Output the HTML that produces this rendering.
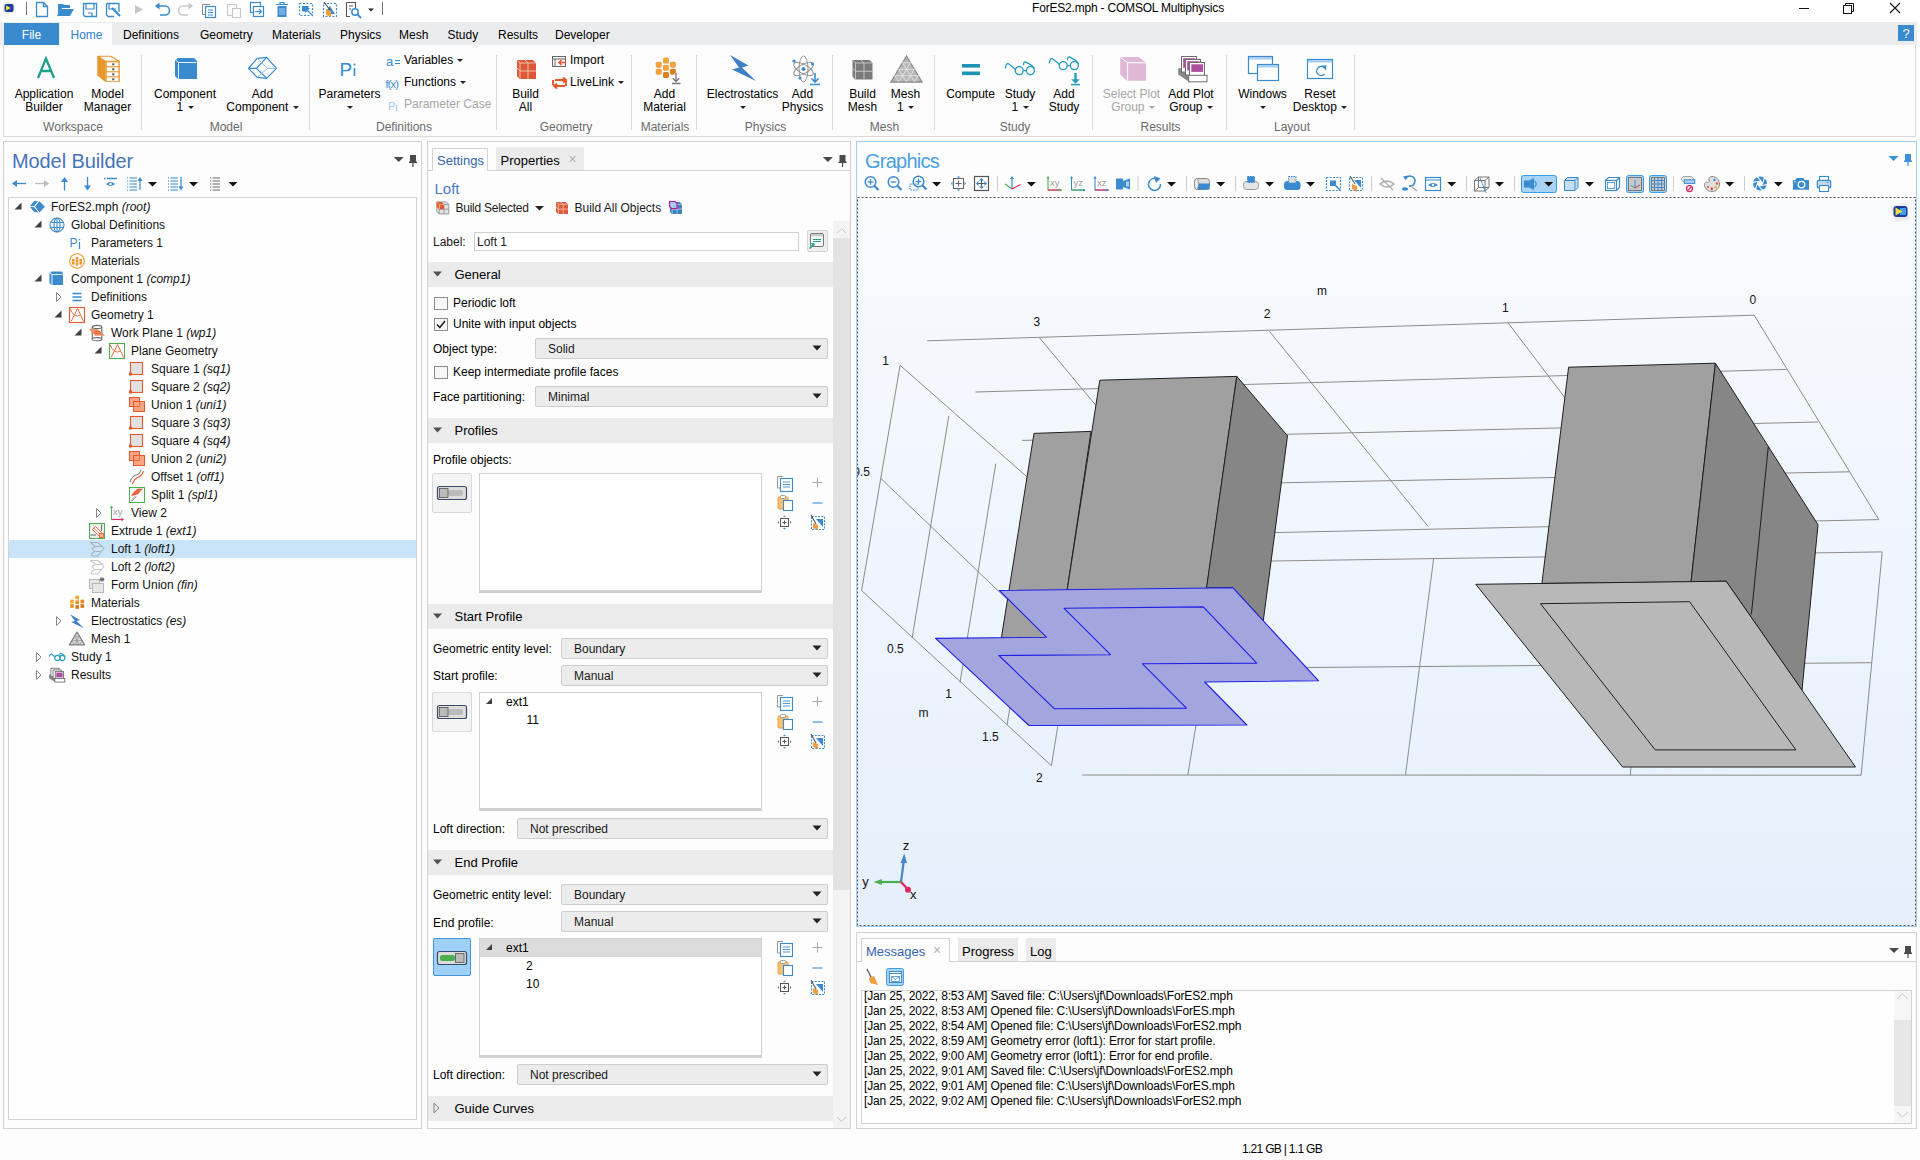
<!DOCTYPE html><html><head><meta charset="utf-8"><style>
html,body{margin:0;padding:0;width:1920px;height:1160px;overflow:hidden;background:#fcfcfc;font-family:"Liberation Sans",sans-serif;}
.a{position:absolute;}
.t{position:absolute;white-space:nowrap;line-height:1;font-family:"Liberation Sans",sans-serif;}
i{font-style:italic;}
</style></head><body>

<div class="a" style="left:0px;top:0px;width:1920px;height:22px;background:#ffffff"></div>
<div class="t" style="left:828.0px;width:600px;text-align:center;top:1.8px;font-size:12px;color:#000;letter-spacing:-0.2px">ForES2.mph - COMSOL Multiphysics</div>
<div class="a" style="left:1799px;top:8px;width:10px;height:1px;background:#111"></div>
<svg class="a" style="left:1843px;top:3px;" width="12" height="12" viewBox="0 0 12 12"><rect x="0.5" y="2.5" width="8" height="8" fill="none" stroke="#111"/><path d="M2.5 2.5V0.5H10.5V8.5H8.5" fill="none" stroke="#111"/></svg>
<svg class="a" style="left:1889px;top:2px;" width="12" height="12" viewBox="0 0 12 12"><path d="M1 1L11 11M11 1L1 11" stroke="#111" stroke-width="1.1"/></svg>
<div class="a" style="left:0px;top:22px;width:1917px;height:23px;background:#ebecee"></div>
<div class="a" style="left:4px;top:23px;width:55px;height:22px;background:#3a8ad0"></div>
<div class="t" style="left:-268.5px;width:600px;text-align:center;top:28.8px;font-size:12px;color:#ffffff;">File</div>
<div class="a" style="left:60px;top:23px;width:52px;height:22px;background:#fcfcfc"></div>
<div class="t" style="left:70.5px;top:28.8px;font-size:12px;color:#2f7fd0;">Home</div>
<div class="t" style="left:123.0px;top:28.8px;font-size:12px;color:#000;">Definitions</div>
<div class="t" style="left:200.0px;top:28.8px;font-size:12px;color:#000;">Geometry</div>
<div class="t" style="left:272.0px;top:28.8px;font-size:12px;color:#000;">Materials</div>
<div class="t" style="left:340.0px;top:28.8px;font-size:12px;color:#000;">Physics</div>
<div class="t" style="left:399.0px;top:28.8px;font-size:12px;color:#000;">Mesh</div>
<div class="t" style="left:447.5px;top:28.8px;font-size:12px;color:#000;">Study</div>
<div class="t" style="left:498.0px;top:28.8px;font-size:12px;color:#000;">Results</div>
<div class="t" style="left:555.0px;top:28.8px;font-size:12px;color:#000;">Developer</div>
<div class="a" style="left:1898px;top:25px;width:16px;height:16px;background:#3a8ad0"></div>
<div class="t" style="left:1606.0px;width:600px;text-align:center;top:27.0px;font-size:13px;color:#fff;">?</div>
<div class="a" style="left:3px;top:45px;width:1913px;height:92px;background:#fcfcfc;border:1px solid #d9d9d9;border-top:none;box-sizing:border-box"></div>
<div class="a" style="left:141px;top:55px;width:1px;height:75px;background:#d8d8d8"></div>
<div class="a" style="left:309px;top:55px;width:1px;height:75px;background:#d8d8d8"></div>
<div class="a" style="left:496px;top:55px;width:1px;height:75px;background:#d8d8d8"></div>
<div class="a" style="left:631px;top:55px;width:1px;height:75px;background:#d8d8d8"></div>
<div class="a" style="left:696px;top:55px;width:1px;height:75px;background:#d8d8d8"></div>
<div class="a" style="left:832px;top:55px;width:1px;height:75px;background:#d8d8d8"></div>
<div class="a" style="left:934px;top:55px;width:1px;height:75px;background:#d8d8d8"></div>
<div class="a" style="left:1092px;top:55px;width:1px;height:75px;background:#d8d8d8"></div>
<div class="a" style="left:1226px;top:55px;width:1px;height:75px;background:#d8d8d8"></div>
<div class="a" style="left:1354px;top:55px;width:1px;height:75px;background:#d8d8d8"></div>
<div class="t" style="left:-227.0px;width:600px;text-align:center;top:120.8px;font-size:12px;color:#6b6b6b;">Workspace</div>
<div class="t" style="left:-74.0px;width:600px;text-align:center;top:120.8px;font-size:12px;color:#6b6b6b;">Model</div>
<div class="t" style="left:104.0px;width:600px;text-align:center;top:120.8px;font-size:12px;color:#6b6b6b;">Definitions</div>
<div class="t" style="left:266.0px;width:600px;text-align:center;top:120.8px;font-size:12px;color:#6b6b6b;">Geometry</div>
<div class="t" style="left:365.0px;width:600px;text-align:center;top:120.8px;font-size:12px;color:#6b6b6b;">Materials</div>
<div class="t" style="left:465.5px;width:600px;text-align:center;top:120.8px;font-size:12px;color:#6b6b6b;">Physics</div>
<div class="t" style="left:584.5px;width:600px;text-align:center;top:120.8px;font-size:12px;color:#6b6b6b;">Mesh</div>
<div class="t" style="left:715.0px;width:600px;text-align:center;top:120.8px;font-size:12px;color:#6b6b6b;">Study</div>
<div class="t" style="left:860.5px;width:600px;text-align:center;top:120.8px;font-size:12px;color:#6b6b6b;">Results</div>
<div class="t" style="left:992.0px;width:600px;text-align:center;top:120.8px;font-size:12px;color:#6b6b6b;">Layout</div>
<div class="t" style="left:-256.0px;width:600px;text-align:center;top:88.3px;font-size:12px;color:#000;">Application</div>
<div class="t" style="left:-256.0px;width:600px;text-align:center;top:100.8px;font-size:12px;color:#000;">Builder</div>
<div class="t" style="left:-192.5px;width:600px;text-align:center;top:88.3px;font-size:12px;color:#000;">Model</div>
<div class="t" style="left:-192.5px;width:600px;text-align:center;top:100.8px;font-size:12px;color:#000;">Manager</div>
<div class="t" style="left:-115.0px;width:600px;text-align:center;top:88.3px;font-size:12px;color:#000;">Component</div>
<div class="t" style="left:-115.0px;width:600px;text-align:center;top:100.8px;font-size:12px;color:#000;">1 <span style="display:inline-block;width:0;height:0;border-left:3.5px solid transparent;border-right:3.5px solid transparent;border-top:3.5px solid #222;vertical-align:2px;margin-left:1px"></span></div>
<div class="t" style="left:-37.5px;width:600px;text-align:center;top:88.3px;font-size:12px;color:#000;">Add</div>
<div class="t" style="left:-37.5px;width:600px;text-align:center;top:100.8px;font-size:12px;color:#000;">Component <span style="display:inline-block;width:0;height:0;border-left:3.5px solid transparent;border-right:3.5px solid transparent;border-top:3.5px solid #222;vertical-align:2px;margin-left:1px"></span></div>
<div class="t" style="left:49.5px;width:600px;text-align:center;top:88.3px;font-size:12px;color:#000;">Parameters</div>
<div class="t" style="left:49.5px;width:600px;text-align:center;top:100.8px;font-size:12px;color:#000;"><span style="display:inline-block;width:0;height:0;border-left:3.5px solid transparent;border-right:3.5px solid transparent;border-top:3.5px solid #222;vertical-align:2px;margin-left:0"></span></div>
<div class="t" style="left:225.5px;width:600px;text-align:center;top:88.3px;font-size:12px;color:#000;">Build</div>
<div class="t" style="left:225.5px;width:600px;text-align:center;top:100.8px;font-size:12px;color:#000;">All</div>
<div class="t" style="left:364.5px;width:600px;text-align:center;top:88.3px;font-size:12px;color:#000;">Add</div>
<div class="t" style="left:364.5px;width:600px;text-align:center;top:100.8px;font-size:12px;color:#000;">Material</div>
<div class="t" style="left:442.5px;width:600px;text-align:center;top:88.3px;font-size:12px;color:#000;">Electrostatics</div>
<div class="t" style="left:442.5px;width:600px;text-align:center;top:100.8px;font-size:12px;color:#000;"><span style="display:inline-block;width:0;height:0;border-left:3.5px solid transparent;border-right:3.5px solid transparent;border-top:3.5px solid #222;vertical-align:2px;margin-left:0"></span></div>
<div class="t" style="left:502.5px;width:600px;text-align:center;top:88.3px;font-size:12px;color:#000;">Add</div>
<div class="t" style="left:502.5px;width:600px;text-align:center;top:100.8px;font-size:12px;color:#000;">Physics</div>
<div class="t" style="left:562.5px;width:600px;text-align:center;top:88.3px;font-size:12px;color:#000;">Build</div>
<div class="t" style="left:562.5px;width:600px;text-align:center;top:100.8px;font-size:12px;color:#000;">Mesh</div>
<div class="t" style="left:605.5px;width:600px;text-align:center;top:88.3px;font-size:12px;color:#000;">Mesh</div>
<div class="t" style="left:605.5px;width:600px;text-align:center;top:100.8px;font-size:12px;color:#000;">1 <span style="display:inline-block;width:0;height:0;border-left:3.5px solid transparent;border-right:3.5px solid transparent;border-top:3.5px solid #222;vertical-align:2px;margin-left:1px"></span></div>
<div class="t" style="left:670.5px;width:600px;text-align:center;top:88.3px;font-size:12px;color:#000;">Compute</div>
<div class="t" style="left:720.0px;width:600px;text-align:center;top:88.3px;font-size:12px;color:#000;">Study</div>
<div class="t" style="left:720.0px;width:600px;text-align:center;top:100.8px;font-size:12px;color:#000;">1 <span style="display:inline-block;width:0;height:0;border-left:3.5px solid transparent;border-right:3.5px solid transparent;border-top:3.5px solid #222;vertical-align:2px;margin-left:1px"></span></div>
<div class="t" style="left:764.0px;width:600px;text-align:center;top:88.3px;font-size:12px;color:#000;">Add</div>
<div class="t" style="left:764.0px;width:600px;text-align:center;top:100.8px;font-size:12px;color:#000;">Study</div>
<div class="t" style="left:891.0px;width:600px;text-align:center;top:88.3px;font-size:12px;color:#000;">Add Plot</div>
<div class="t" style="left:891.0px;width:600px;text-align:center;top:100.8px;font-size:12px;color:#000;">Group <span style="display:inline-block;width:0;height:0;border-left:3.5px solid transparent;border-right:3.5px solid transparent;border-top:3.5px solid #222;vertical-align:2px;margin-left:1px"></span></div>
<div class="t" style="left:962.5px;width:600px;text-align:center;top:88.3px;font-size:12px;color:#000;">Windows</div>
<div class="t" style="left:962.5px;width:600px;text-align:center;top:100.8px;font-size:12px;color:#000;"><span style="display:inline-block;width:0;height:0;border-left:3.5px solid transparent;border-right:3.5px solid transparent;border-top:3.5px solid #222;vertical-align:2px;margin-left:0"></span></div>
<div class="t" style="left:1020.0px;width:600px;text-align:center;top:88.3px;font-size:12px;color:#000;">Reset</div>
<div class="t" style="left:1020.0px;width:600px;text-align:center;top:100.8px;font-size:12px;color:#000;">Desktop <span style="display:inline-block;width:0;height:0;border-left:3.5px solid transparent;border-right:3.5px solid transparent;border-top:3.5px solid #222;vertical-align:2px;margin-left:1px"></span></div>
<div class="t" style="left:831.5px;width:600px;text-align:center;top:88.3px;font-size:12px;color:#a6a6a6;">Select Plot</div>
<div class="t" style="left:833.0px;width:600px;text-align:center;top:100.8px;font-size:12px;color:#a6a6a6;">Group <span style="display:inline-block;width:0;height:0;border-left:3.5px solid transparent;border-right:3.5px solid transparent;border-top:3.5px solid #a6a6a6;vertical-align:2px;margin-left:1px"></span></div>
<div class="t" style="left:404.0px;top:53.8px;font-size:12px;color:#000;">Variables <span style="display:inline-block;width:0;height:0;border-left:3.5px solid transparent;border-right:3.5px solid transparent;border-top:3.5px solid #222;vertical-align:2px;margin-left:1px"></span></div>
<div class="t" style="left:404.0px;top:75.8px;font-size:12px;color:#000;">Functions <span style="display:inline-block;width:0;height:0;border-left:3.5px solid transparent;border-right:3.5px solid transparent;border-top:3.5px solid #222;vertical-align:2px;margin-left:1px"></span></div>
<div class="t" style="left:404.0px;top:97.8px;font-size:12px;color:#a6a6a6;">Parameter Case</div>
<div class="t" style="left:570.0px;top:54.3px;font-size:12px;color:#000;">Import</div>
<div class="t" style="left:570.0px;top:75.8px;font-size:12px;color:#000;">LiveLink <span style="display:inline-block;width:0;height:0;border-left:3.5px solid transparent;border-right:3.5px solid transparent;border-top:3.5px solid #222;vertical-align:2px;margin-left:1px"></span></div>
<div class="a" style="left:3px;top:141px;width:419px;height:988px;border:1px solid #d2d2d2;box-sizing:border-box;background:#fdfdfd"></div>
<div class="t" style="left:12.0px;top:151.1px;font-size:20px;color:#4673b9;letter-spacing:-0.1px">Model Builder</div>
<div class="a" style="left:8px;top:197px;width:409px;height:923px;border:1px solid #d2d2d2;box-sizing:border-box;background:#fefefe"></div>
<div class="a" style="left:427px;top:141px;width:424px;height:988px;border:1px solid #d2d2d2;box-sizing:border-box;background:#fdfdfd"></div>
<div class="a" style="left:428px;top:170px;width:422px;height:1px;background:#d2d2d2"></div>
<div class="a" style="left:432px;top:148px;width:56px;height:23px;background:#fdfdfd;border:1px solid #d2d2d2;border-bottom:none;box-sizing:border-box"></div>
<div class="t" style="left:437.0px;top:154.0px;font-size:13px;color:#3565ae;">Settings</div>
<div class="a" style="left:496px;top:147px;width:88px;height:23px;background:#ebebeb"></div>
<div class="t" style="left:500.5px;top:154.0px;font-size:13px;color:#000;">Properties</div>
<div class="t" style="left:272.5px;width:600px;text-align:center;top:152.1px;font-size:14px;color:#b0b0b0;">&#215;</div>
<div class="a" style="left:856px;top:141px;width:1061px;height:786px;border:1px solid #9fd0f7;box-sizing:border-box;background:#fdfdfd"></div>
<div class="t" style="left:865.0px;top:151.1px;font-size:20px;color:#4a9fe6;letter-spacing:-0.75px">Graphics</div>
<div class="a" style="left:856px;top:932px;width:1061px;height:197px;border:1px solid #d2d2d2;box-sizing:border-box;background:#fdfdfd"></div>
<div class="a" style="left:857px;top:961px;width:1059px;height:1px;background:#d2d2d2"></div>
<div class="a" style="left:861px;top:938px;width:89px;height:24px;background:#fdfdfd;border:1px solid #d2d2d2;border-bottom:none;box-sizing:border-box"></div>
<div class="t" style="left:866.0px;top:945.0px;font-size:13px;color:#3565ae;">Messages</div>
<div class="t" style="left:637.0px;width:600px;text-align:center;top:943.1px;font-size:14px;color:#b0b0b0;">&#215;</div>
<div class="a" style="left:958px;top:938px;width:60px;height:23px;background:#ebebeb"></div>
<div class="t" style="left:962.0px;top:945.0px;font-size:13px;color:#000;">Progress</div>
<div class="a" style="left:1026px;top:938px;width:30px;height:23px;background:#ebebeb"></div>
<div class="t" style="left:1030.0px;top:945.0px;font-size:13px;color:#000;">Log</div>
<div class="a" style="left:861px;top:990px;width:1051px;height:134px;border:1px solid #d2d2d2;box-sizing:border-box;background:#fefefe"></div>
<div class="t" style="left:864.0px;top:989.8px;font-size:12px;color:#000;letter-spacing:-0.15px">[Jan 25, 2022, 8:53 AM] Saved file: C:\Users\jf\Downloads\ForES2.mph</div>
<div class="t" style="left:864.0px;top:1004.8px;font-size:12px;color:#000;letter-spacing:-0.15px">[Jan 25, 2022, 8:53 AM] Opened file: C:\Users\jf\Downloads\ForES.mph</div>
<div class="t" style="left:864.0px;top:1019.8px;font-size:12px;color:#000;letter-spacing:-0.15px">[Jan 25, 2022, 8:54 AM] Opened file: C:\Users\jf\Downloads\ForES2.mph</div>
<div class="t" style="left:864.0px;top:1034.8px;font-size:12px;color:#000;letter-spacing:-0.15px">[Jan 25, 2022, 8:59 AM] Geometry error (loft1): Error for start profile.</div>
<div class="t" style="left:864.0px;top:1049.8px;font-size:12px;color:#000;letter-spacing:-0.15px">[Jan 25, 2022, 9:00 AM] Geometry error (loft1): Error for end profile.</div>
<div class="t" style="left:864.0px;top:1064.8px;font-size:12px;color:#000;letter-spacing:-0.15px">[Jan 25, 2022, 9:01 AM] Saved file: C:\Users\jf\Downloads\ForES2.mph</div>
<div class="t" style="left:864.0px;top:1079.8px;font-size:12px;color:#000;letter-spacing:-0.15px">[Jan 25, 2022, 9:01 AM] Opened file: C:\Users\jf\Downloads\ForES.mph</div>
<div class="t" style="left:864.0px;top:1094.8px;font-size:12px;color:#000;letter-spacing:-0.15px">[Jan 25, 2022, 9:02 AM] Opened file: C:\Users\jf\Downloads\ForES2.mph</div>
<div class="a" style="left:1894px;top:991px;width:17px;height:132px;background:#f6f6f6"></div>
<div class="a" style="left:1894px;top:1020px;width:17px;height:86px;background:#e6e6e6"></div>
<div class="t" style="left:1242.0px;top:1142.8px;font-size:12px;color:#000;letter-spacing:-0.7px">1.21 GB | 1.1 GB</div>
<svg class="a" style="left:0px;top:0px;" width="1920" height="140" viewBox="0 0 1920 140"><circle cx="8.5" cy="8" r="6.5" fill="#eee"/><rect x="4.5" y="4" width="9" height="8" rx="2" fill="#1d3d9a"/><path d="M6 5.5L11 8L6 10.5Z" fill="#f2e040"/><path d="M26.5 2V15" stroke="#777" stroke-width="1"/><path d="M36.5 2.5H43.5L47.5 6.5V16.5H36.5Z M43.5 2.5V6.5H47.5" fill="none" stroke="#3a8ad0" stroke-width="1.3"/><path d="M58 4H63L64 5H70V8H62L58 15Z" fill="#3a8ad0"/><path d="M61 9H74L70 16H57Z" fill="#3a8ad0"/><path d="M83.5 3.5H96.5V16.5H85L83.5 15Z" fill="none" stroke="#3a8ad0" stroke-width="1.3"/><path d="M86 3.5V9H94V3.5M88 13H92V16" fill="none" stroke="#3a8ad0" stroke-width="1.2"/><path d="M106.5 3.5H119V12M114 16.5H108L106.5 15V3.5" fill="none" stroke="#3a8ad0" stroke-width="1.3"/><path d="M109 3.5V9H116" fill="none" stroke="#3a8ad0" stroke-width="1.2"/><path d="M112 8L120 16" stroke="#3a8ad0" stroke-width="2.2"/><path d="M135 5L143 9.5L135 14Z" fill="#c4c4c4"/><path d="M157 6H165A4.5 4.5 0 0 1 165 15H160" fill="none" stroke="#3a8ad0" stroke-width="1.5"/><path d="M155 6L159.5 2.5V9.5Z" fill="#3a8ad0"/><path d="M191 6H183A4.5 4.5 0 0 0 183 15H188" fill="none" stroke="#c8c8c8" stroke-width="1.5"/><path d="M193 6L188.5 2.5V9.5Z" fill="#c8c8c8"/><path d="M202.5 4.5H210M202.5 4.5V14.5H205" fill="none" stroke="#888" stroke-width="1"/><rect x="205.5" y="6.5" width="10" height="11" fill="#fff" stroke="#3a8ad0" stroke-width="1.2"/><path d="M208 10H213M208 12.5H213M208 15H213" stroke="#3a8ad0"/><rect x="227.5" y="4.5" width="9" height="11" fill="none" stroke="#c8c8c8" stroke-width="1.2"/><rect x="232.5" y="8.5" width="8" height="9" fill="#fff" stroke="#c8c8c8" stroke-width="1.2"/><rect x="250.5" y="2.5" width="10" height="10" fill="none" stroke="#3a8ad0" stroke-width="1.2"/><rect x="253.5" y="6.5" width="10" height="10" fill="#fff" stroke="#3a8ad0" stroke-width="1.2"/><path d="M255 11.5H261M259 9L261.5 11.5L259 14" fill="none" stroke="#3a8ad0" stroke-width="1.2"/><path d="M276 4.5H288M280 4.5V2.5H284V4.5" fill="none" stroke="#3a8ad0" stroke-width="1.2"/><path d="M277.5 6H286.5V17H277.5Z" fill="#3a8ad0"/><path d="M280 8V15M282 8V15M284 8V15" stroke="#fff" stroke-width="0.6"/><rect x="299.5" y="3.5" width="13" height="12" fill="none" stroke="#3a8ad0" stroke-width="1.2" stroke-dasharray="2 1.5"/><rect x="302" y="6" width="6.5" height="5.5" fill="#3a8ad0"/><path d="M306 9L313 16" stroke="#fcfcfc" stroke-width="3"/><path d="M305.5 8.5L313 16" stroke="#3a8ad0" stroke-width="1.3"/><path d="M305 8H310L305 13Z" fill="#3a8ad0"/><rect x="323.5" y="3.5" width="13" height="13" fill="none" stroke="#3a8ad0" stroke-width="1.2" stroke-dasharray="2 1.5"/><path d="M330 6L335 14H331L327 10Z" fill="#3a8ad0"/><path d="M324 2L330 10" stroke="#555" stroke-width="1.2"/><path d="M326 9L331 11L331 17L326 15Z" fill="#e8a040"/><path d="M346.5 2.5H355.5V8M346.5 2.5V16.5H350" fill="none" stroke="#555" stroke-width="1.1"/><path d="M349 6H353M349 9H351" stroke="#555"/><circle cx="355" cy="12" r="3.2" fill="none" stroke="#3a8ad0" stroke-width="1.5"/><path d="M357.5 14.5L361 18" stroke="#3a8ad0" stroke-width="1.8"/><path d="M368 8.5H374L371 11.5Z" fill="#222"/><path d="M382.5 2V15" stroke="#777"/><path d="M38 78L46 58.5L54 78M40.8 71H51.2" fill="none" stroke="#1fa08a" stroke-width="2.3"/><path d="M97.3 55.8L105.5 61V82L97.3 75.5Z" fill="#e8962a"/><path d="M97.8 56.3H110.8L119.3 61.2H105.3Z" fill="#fff" stroke="#e8962a" stroke-width="1.1" stroke-linejoin="round"/><rect x="105.5" y="61.2" width="14.3" height="20.8" fill="#e8962a"/><rect x="106.8" y="62.3" width="11.6" height="3.9" fill="#fff"/><rect x="112.2" y="63.3" width="2.2" height="2" fill="#5a5a5a"/><rect x="106.8" y="67.3" width="11.6" height="3.9" fill="#fff"/><rect x="112.2" y="68.3" width="2.2" height="2" fill="#5a5a5a"/><rect x="106.8" y="72.3" width="11.6" height="3.9" fill="#fff"/><rect x="112.2" y="73.3" width="2.2" height="2" fill="#5a5a5a"/><rect x="106.8" y="77.3" width="11.6" height="3.9" fill="#fff"/><rect x="112.2" y="78.3" width="2.2" height="2" fill="#5a5a5a"/><path d="M175 60.5L178 58H194L197 61V79H178L175 76Z" fill="#3a8ad0"/><path d="M175.5 60L178.5 62.5H196.5M178.5 62.5V79" fill="none" stroke="#fff" stroke-width="0.9"/><g fill="none" stroke="#3a8ad0" stroke-width="1.2" stroke-linejoin="round"><path d="M248.5 68.4L257.2 58.3L266.6 57.4L276.5 68.4L266.6 78.3L257.2 77.4Z"/><path d="M248.5 68.4H256.4L266.6 57.4M256.4 68.4L266.6 78.3"/></g><g fill="none" stroke="#8fbce6" stroke-width="1"><path d="M276.5 68.4H267.4L257.2 58.3M267.4 68.4L257.2 77.4"/></g><text x="339.5" y="75.5" font-family="Liberation Sans" font-size="19" fill="#3a8ad0">P</text><path d="M354.5 68V76" stroke="#3a8ad0" stroke-width="1.6"/><circle cx="354.5" cy="64.5" r="1" fill="#3a8ad0"/><text x="386" y="66" font-family="Liberation Sans" font-size="13" fill="#3a8ad0">a</text><path d="M395 60.5H400M395 63.5H400" stroke="#3a8ad0" stroke-width="1.2"/><text x="385.5" y="88" font-family="Liberation Sans" font-size="11" fill="#3a8ad0" letter-spacing="-0.8">f(x)</text><text x="388" y="110" font-family="Liberation Sans" font-size="11" fill="#a8c8ea">P</text><path d="M396.5 105V111" stroke="#a8c8ea" stroke-width="1.2"/><path d="M517 60H533L536 63V79H519.5L517 76Z" fill="#dc5a3a"/><path d="M517.5 60.5L520 63H536M520 63V79M528.0 63V79M520 71.0H536M525.0 60L528.0 63M517 68.0L520 71.0" fill="none" stroke="#f4c8b4" stroke-width="0.9"/><rect x="552.5" y="56.5" width="13" height="10" fill="none" stroke="#666" stroke-width="1"/><path d="M552.5 59H565.5M555 59V66" stroke="#666" stroke-width="1"/><path d="M566 62.5H559M561.5 60L559 62.5L561.5 65" fill="none" stroke="#e8572a" stroke-width="1.6"/><path d="M555 80H566M563 77.5L566 80L563 82.5M565 86H554M557 83.5L554 86L557 88.5" fill="none" stroke="#e8572a" stroke-width="1.9"/><path d="M553 80V85M566 81V86" stroke="#e8572a" stroke-width="1.9"/><rect x="663.0" y="57.5" width="6" height="6" rx="1.6" fill="#f0a33a"/><rect x="663.0" y="64.7" width="6" height="6" rx="1.6" fill="#f0a33a"/><rect x="663.0" y="72.0" width="6" height="6" rx="1.6" fill="#d9801f"/><rect x="655.7" y="61.7" width="6" height="6" rx="1.6" fill="#f0a33a"/><rect x="655.7" y="68.7" width="6" height="6" rx="1.6" fill="#f0a33a"/><rect x="669.9" y="61.7" width="6" height="6" rx="1.6" fill="#f0a33a"/><rect x="669.9" y="68.7" width="6" height="6" rx="1.6" fill="#d9801f"/><path d="M676 73V81.5M672.8 78.3L676 81.5L679.2 78.3" fill="none" stroke="#fcfcfc" stroke-width="3"/><path d="M676 73V81.5M672.8 78.3L676 81.5L679.2 78.3M672 83.5H680.5" fill="none" stroke="#777" stroke-width="1.3"/><path d="M730 55L748.5 65.5L742 67.5L756 81L732 69.5L739 67.5Z" fill="#3e7fc8"/><g fill="none" stroke="#888" stroke-width="0.9"><ellipse cx="803.5" cy="69" rx="11" ry="4.5" transform="rotate(30 803.5 69)"/><ellipse cx="803.5" cy="69" rx="11" ry="4.5" transform="rotate(-30 803.5 69)"/><ellipse cx="803.5" cy="69" rx="4.5" ry="13"/></g><circle cx="803.5" cy="69" r="2" fill="#3a8ad0"/><circle cx="794" cy="61" r="1.6" fill="#3a8ad0"/><circle cx="812.5" cy="64" r="1.5" fill="#3a8ad0"/><circle cx="800" cy="78" r="1.5" fill="#3a8ad0"/><path d="M815 73V82M811.5 78.5L815 82L818.5 78.5M810 84.5H820" fill="none" stroke="#3a8ad0" stroke-width="1.6"/><path d="M852.5 60H869.5L872.5 63V79.5H855.0L852.5 76.5Z" fill="#7a7a7a"/><path d="M853.0 60.5L855.5 63H872.5M855.5 63V79.5M864.0 63V79.5M855.5 71.25H872.5M861.0 60L864.0 63M852.5 68.25L855.5 71.25" fill="none" stroke="#c8c8c8" stroke-width="0.9"/><path d="M906.5 56L922 82H891Z" fill="#b8b8b8" stroke="#8a8a8a" stroke-width="1.3"/><g stroke="#eee" stroke-width="0.7"><path d="M902.5 62.7H910.5M898.6 69.3H914.4M894.7 75.7H918.3M902.5 62.7L914.4 82M898.6 69.3L906.5 82M894.7 75.7L898.6 82M910.5 62.7L898.6 82M914.4 69.3L906.5 82M918.3 75.7L914.4 82"/></g><rect x="962" y="64" width="18" height="3.6" fill="#1e93b8"/><rect x="962" y="71.5" width="18" height="3.6" fill="#1e93b8"/><g transform="translate(0.0,0.0)" fill="none" stroke="#259cbd" stroke-width="1.3"><path d="M1005.3 68.5Q1006 63 1008.3 63.6L1015.3 69.3"/><circle cx="1019.2" cy="70.6" r="4"/><circle cx="1030.4" cy="70.6" r="4"/><path d="M1023.2 70.6H1026.4"/><path d="M1034.3 69Q1034 66 1025.5 61.8Q1023.5 61.5 1023.5 65.3"/></g><g transform="translate(44.0,-5.0)" fill="none" stroke="#259cbd" stroke-width="1.3"><path d="M1005.3 68.5Q1006 63 1008.3 63.6L1015.3 69.3"/><circle cx="1019.2" cy="70.6" r="4"/><circle cx="1030.4" cy="70.6" r="4"/><path d="M1023.2 70.6H1026.4"/><path d="M1034.3 69Q1034 66 1025.5 61.8Q1023.5 61.5 1023.5 65.3"/></g><path d="M1075.5 73V80" stroke="#259cbd" stroke-width="2.4"/><path d="M1071.2 79.3H1079.8L1075.5 83.8Z" fill="#259cbd"/><path d="M1071 84.6H1080" stroke="#259cbd" stroke-width="1.5"/><path d="M1120.2 57H1138.6L1146 62.5V80.7H1127L1120.2 74.5Z" fill="#dfb7d7"/><path d="M1120.6 57.4L1127.6 62.8H1146M1127.6 62.8V80.7" fill="none" stroke="#fff" stroke-width="1"/><path d="M1178.2 68.2H1181L1189 74.5V81.8L1178.2 74.6Z" fill="#86878b"/><rect x="1181.5" y="56.5" width="15" height="15.5" fill="#fff" stroke="#6e6e6e" stroke-width="1"/><rect x="1183.2" y="58.2" width="12.0" height="9.6" fill="#b04fa0"/><rect x="1185.5" y="59.5" width="15" height="15.5" fill="#fff" stroke="#6e6e6e" stroke-width="1"/><rect x="1187.2" y="61.2" width="12.0" height="9.3" fill="#b04fa0"/><rect x="1189.5" y="62.5" width="15" height="15.5" fill="#fff" stroke="#6e6e6e" stroke-width="1"/><rect x="1191.3" y="64.3" width="11.8" height="7.6" fill="#b04fa0"/><rect x="1188.7" y="75.3" width="18.3" height="6.5" fill="#fff" stroke="#6e6e6e" stroke-width="1"/><rect x="1248.5" y="56.5" width="24" height="17" fill="#fff" stroke="#3a8ad0" stroke-width="1.2"/><rect x="1249" y="57" width="23" height="2.5" fill="#a8cdf0"/><rect x="1257.5" y="64.5" width="21" height="16" fill="#fff" stroke="#3a8ad0" stroke-width="1.2"/><rect x="1258" y="65" width="20" height="2.5" fill="#a8cdf0"/><rect x="1307.5" y="59.5" width="25" height="19" fill="#fff" stroke="#3a8ad0" stroke-width="1.2"/><rect x="1308" y="60" width="24" height="2.5" fill="#a8cdf0"/><path d="M1324 67.5A4.5 4.5 0 1 0 1324.5 74" fill="none" stroke="#3a8ad0" stroke-width="1.3"/><path d="M1321.5 65.5L1326.5 65.5L1326 70.5Z" fill="#3a8ad0"/></svg>
<svg class="a" style="left:0px;top:0px;" width="1920" height="1000" viewBox="0 0 1920 1000"><path d="M393.7 157H403.7L398.7 162Z" fill="#4a4a4a"/><path d="M410 155H416V161.5H417V163H409V161.5H410Z" fill="#4a4a4a"/><path d="M413 163V167" stroke="#4a4a4a" stroke-width="1.2"/><path d="M822.9 157H832.9L827.9 162Z" fill="#4a4a4a"/><path d="M839.5 155H845.5V161.5H846.5V163H838.5V161.5H839.5Z" fill="#4a4a4a"/><path d="M842.5 163V167" stroke="#4a4a4a" stroke-width="1.2"/><path d="M1888.5 156H1898.5L1893.5 161Z" fill="#3d8fd8"/><path d="M1905 154H1911V160.5H1912V162H1904V160.5H1905Z" fill="#3d8fd8"/><path d="M1908 162V166" stroke="#3d8fd8" stroke-width="1.2"/><path d="M1889 948H1899L1894 953Z" fill="#4a4a4a"/><path d="M1905 946H1911V952.5H1912V954H1904V952.5H1905Z" fill="#4a4a4a"/><path d="M1908 954V958" stroke="#4a4a4a" stroke-width="1.2"/><path d="M14 183.5H26" stroke="#3a8ad0" stroke-width="1.3"/><path d="M12 183.5L17 180.0V187.0Z" fill="#3a8ad0"/><path d="M35 183.5H47" stroke="#bbb" stroke-width="1.3"/><path d="M49 183.5L44 180.0V187.0Z" fill="#bbb"/><path d="M64.5 179V190.5" stroke="#3a8ad0" stroke-width="1.3"/><path d="M64.5 177L61 182H68Z" fill="#3a8ad0"/><path d="M87.5 177V188" stroke="#3a8ad0" stroke-width="1.3"/><path d="M87.5 190.5L84 185.5H91Z" fill="#3a8ad0"/><path d="M104 178.5H105.5M107 178.5H117" stroke="#3a8ad0" stroke-width="1.3"/><path d="M106 184Q110.5 180 115 184Q110.5 188 106 184Z" fill="#3a8ad0"/><circle cx="110.5" cy="184" r="1.3" fill="#fff"/><path d="M127 178H128.2M129.5 178H137" stroke="#3a8ad0" stroke-width="1.2"/><path d="M127 181H128.2M129.5 181H137" stroke="#3a8ad0" stroke-width="1.2"/><path d="M127 184H128.2M129.5 184H137" stroke="#3a8ad0" stroke-width="1.2"/><path d="M127 187H128.2M129.5 187H137" stroke="#3a8ad0" stroke-width="1.2"/><path d="M127 190H128.2M129.5 190H137" stroke="#3a8ad0" stroke-width="1.2"/><path d="M140 190V179" stroke="#3a8ad0" stroke-width="1.2"/><path d="M140 177L137.5 181H142.5Z" fill="#3a8ad0"/><path d="M148.0 182H157.0L152.5 186.5Z" fill="#111"/><path d="M168 178H169.2M170.5 178H178" stroke="#3a8ad0" stroke-width="1.2"/><path d="M168 181H169.2M170.5 181H178" stroke="#3a8ad0" stroke-width="1.2"/><path d="M168 184H169.2M170.5 184H178" stroke="#3a8ad0" stroke-width="1.2"/><path d="M168 187H169.2M170.5 187H178" stroke="#3a8ad0" stroke-width="1.2"/><path d="M168 190H169.2M170.5 190H178" stroke="#3a8ad0" stroke-width="1.2"/><path d="M181 177V188" stroke="#3a8ad0" stroke-width="1.2"/><path d="M181 190.5L178.5 186.5H183.5Z" fill="#3a8ad0"/><path d="M189.0 182H198.0L193.5 186.5Z" fill="#111"/><path d="M210 178H211.2M212.5 178H220" stroke="#666" stroke-width="1.2"/><path d="M210 181H211.2M212.5 181H220" stroke="#666" stroke-width="1.2"/><path d="M210 184H211.2M212.5 184H220" stroke="#666" stroke-width="1.2"/><path d="M210 187H211.2M212.5 187H220" stroke="#666" stroke-width="1.2"/><path d="M210 190H211.2M212.5 190H220" stroke="#666" stroke-width="1.2"/><path d="M228.5 182H237.5L233 186.5Z" fill="#111"/><circle cx="870.5" cy="182" r="5.3" fill="none" stroke="#3a8ad0" stroke-width="1.5"/><path d="M874.3 185.8L878.5 190" stroke="#3a8ad0" stroke-width="2.2"/><path d="M867.7 182H873.3" stroke="#3a8ad0" stroke-width="1.3"/><path d="M870.5 179.2V184.8" stroke="#3a8ad0" stroke-width="1.3"/><circle cx="893.5" cy="182" r="5.3" fill="none" stroke="#3a8ad0" stroke-width="1.5"/><path d="M897.3 185.8L901.5 190" stroke="#3a8ad0" stroke-width="2.2"/><path d="M890.7 182H896.3" stroke="#3a8ad0" stroke-width="1.3"/><rect x="910" y="184" width="8" height="6" fill="none" stroke="#3a8ad0" stroke-dasharray="1.5 1"/><circle cx="918.5" cy="181.5" r="5.3" fill="none" stroke="#3a8ad0" stroke-width="1.5"/><path d="M922.3 185.3L926.5 189.5" stroke="#3a8ad0" stroke-width="2.2"/><path d="M915.7 181.5H921.3" stroke="#3a8ad0" stroke-width="1.3"/><path d="M918.5 178.7V184.3" stroke="#3a8ad0" stroke-width="1.3"/><path d="M932.1 182H941.1L936.6 186.5Z" fill="#111"/><rect x="953.5" y="178.5" width="10" height="10" fill="none" stroke="#666"/><path d="M958.5 180.5V186.5M955.5 183.5H961.5" stroke="#666" stroke-width="1.1"/><path d="M958.5 176L956.5 177.5H960.5Z M958.5 191L956.5 189.5H960.5Z M951 183.5L952.5 181.5V185.5Z M966 183.5L964.5 181.5V185.5Z" fill="#3a8ad0"/><rect x="974.5" y="176.5" width="14" height="14" fill="none" stroke="#555" stroke-width="1.2"/><path d="M981.5 179.5V187.5M977.5 183.5H985.5" stroke="#555" stroke-width="1.1"/><path d="M981.5 178L979 180.5H984Z M981.5 189L979 186.5H984Z M976 183.5L978.5 181V186Z M987 183.5L984.5 181V186Z" fill="#3a8ad0"/><path d="M997.5 176V191" stroke="#ccc"/><path d="M1012 189V177" stroke="#3a8ad0" stroke-width="1.2"/><path d="M1012 176L1010 179H1014Z" fill="#3a8ad0"/><path d="M1012 189L1005 184" stroke="#4caf50" stroke-width="1.2"/><path d="M1012 189L1020.5 184.5" stroke="#e0245e" stroke-width="1.2"/><path d="M1026.9 182H1035.9L1031.4 186.5Z" fill="#111"/><path d="M1048.0 177V190H1061.5" fill="none" stroke="#4caf50" stroke-width="1.1"/><path d="M1048.0 190H1061.5" stroke="#e0245e" stroke-width="1.1"/><path d="M1046.5 178.5L1048.0 176L1049.5 178.5Z M1062.0 190L1059.5 188.5V191.5Z" fill="#4caf50"/><text x="1050.0" y="186" font-family="Liberation Sans" font-size="9.5" fill="#9a9a9a">xy</text><path d="M1071.5 177V190H1085" fill="none" stroke="#3a8ad0" stroke-width="1.1"/><path d="M1071.5 190H1085" stroke="#4caf50" stroke-width="1.1"/><path d="M1070 178.5L1071.5 176L1073 178.5Z M1085.5 190L1083 188.5V191.5Z" fill="#3a8ad0"/><text x="1073.5" y="186" font-family="Liberation Sans" font-size="9.5" fill="#9a9a9a">yz</text><path d="M1095.0 177V190H1108.5" fill="none" stroke="#3a8ad0" stroke-width="1.1"/><path d="M1095.0 190H1108.5" stroke="#e0245e" stroke-width="1.1"/><path d="M1093.5 178.5L1095.0 176L1096.5 178.5Z M1109.0 190L1106.5 188.5V191.5Z" fill="#3a8ad0"/><text x="1097.0" y="186" font-family="Liberation Sans" font-size="9.5" fill="#9a9a9a">xz</text><path d="M1116 178.5H1123V189.5H1116Z" fill="#3a8ad0"/><path d="M1123 181L1130 178.5V189.5L1123 187Z" fill="#3a8ad0"/><rect x="1126" y="181.5" width="3" height="5" fill="#fff" opacity="0.6"/><path d="M1138 176V191" stroke="#ccc"/><path d="M1158 179.5A6 6 0 1 0 1160.5 184" fill="none" stroke="#3a8ad0" stroke-width="1.5"/><path d="M1154 176L1160.5 178.5L1156 183Z" fill="#3a8ad0"/><path d="M1167.0 182H1176.0L1171.5 186.5Z" fill="#111"/><path d="M1186.5 176V191" stroke="#ccc"/><rect x="1194.5" y="178.5" width="15" height="11" rx="3" fill="#ddd" stroke="#888"/><path d="M1197 183.5H1209.5V189.5H1197Z" fill="#3a8ad0"/><ellipse cx="1196.5" cy="184" rx="2" ry="5.5" fill="#eee" stroke="#888" stroke-width="0.8"/><path d="M1216.1 182H1225.1L1220.6 186.5Z" fill="#111"/><path d="M1235.5 176V191" stroke="#ccc"/><rect x="1243.5" y="181.5" width="15" height="8" rx="3" fill="#e6e6e6" stroke="#999"/><rect x="1247.5" y="176.5" width="7" height="6" fill="#3a8ad0" stroke="#3a8ad0" stroke-dasharray="1.5 1"/><path d="M1265.1 182H1274.1L1269.6 186.5Z" fill="#111"/><rect x="1284" y="181" width="16.5" height="9" rx="3.5" fill="#3a8ad0"/><rect x="1288.5" y="176.5" width="7.5" height="6.5" fill="#ddd" stroke="#3a8ad0" stroke-dasharray="1.5 1"/><path d="M1306.0 182H1315.0L1310.5 186.5Z" fill="#111"/><rect x="1326.5" y="177.5" width="14" height="13" fill="none" stroke="#3a8ad0" stroke-width="1.2" stroke-dasharray="2 1.3"/><path d="M1330 180.5H1336V186H1330Z" fill="#3a8ad0"/><path d="M1334 184L1340 190" stroke="#3a8ad0" stroke-width="1.5"/><rect x="1349.5" y="177.5" width="13" height="13" fill="none" stroke="#3a8ad0" stroke-width="1.2" stroke-dasharray="2 1.3"/><path d="M1354 180H1361V188Z" fill="#3a8ad0"/><path d="M1350 176L1355 184" stroke="#555" stroke-width="1.1"/><path d="M1352 184L1357 186L1357 192L1352 189Z" fill="#e8a040"/><path d="M1371.5 176V191" stroke="#ccc"/><path d="M1380 184Q1387 178 1394 184Q1387 190 1380 184Z" fill="none" stroke="#aaa" stroke-width="1.5"/><path d="M1381 178L1393 190" stroke="#aaa" stroke-width="1.3"/><path d="M1406 178A5 5 0 1 1 1409 186" fill="none" stroke="#3a8ad0" stroke-width="1.5"/><path d="M1403 176.5L1407.5 175.5L1406 180.5Z" fill="#3a8ad0"/><ellipse cx="1405" cy="189" rx="3" ry="1.7" fill="#3a8ad0"/><path d="M1412 187L1417 191" stroke="#aaa" stroke-width="1.5"/><rect x="1425.5" y="177.5" width="15" height="13" fill="none" stroke="#3a8ad0" stroke-width="1.2"/><path d="M1425.5 180H1440.5" stroke="#3a8ad0"/><path d="M1428 185Q1433 181 1438 185Q1433 189 1428 185Z" fill="#3a8ad0"/><circle cx="1433" cy="185" r="1.2" fill="#fff"/><path d="M1447.2 182H1456.2L1451.7 186.5Z" fill="#111"/><path d="M1466.5 176V191" stroke="#ccc"/><g fill="none" stroke="#777" stroke-width="1"><path d="M1474.5 180.5L1478.5 177H1489L1485 180.5Z M1474.5 180.5V191H1485V180.5M1485 191L1489 187.5V177M1478.5 177V187.5H1489M1474.5 191L1478.5 187.5"/></g><path d="M1480 178L1486 193" stroke="#3a8ad0" stroke-width="0.9"/><path d="M1495.0 182H1504.0L1499.5 186.5Z" fill="#111"/><path d="M1514.5 176V191" stroke="#ccc"/><rect x="1521.5" y="175.5" width="35" height="17" rx="2" fill="#a8d3f5" stroke="#3d9be9"/><path d="M1524 180.5H1529L1534 178V190L1529 187.5H1524Z" fill="#3a8ad0"/><path d="M1534.5 181A3.5 3.5 0 0 1 1534.5 187" fill="none" stroke="#3a8ad0" stroke-width="1.3"/><path d="M1544.1 182H1553.1L1548.6 186.5Z" fill="#111"/><path d="M1564.5 180.5L1567.5 177.5H1578V187.5L1575 190.5H1564.5Z" fill="#c6def5" stroke="#3a8ad0"/><path d="M1564.5 180.5H1575V190.5M1575 180.5L1578 177.5" fill="none" stroke="#3a8ad0"/><path d="M1585.0 182H1594.0L1589.5 186.5Z" fill="#111"/><rect x="1605.5" y="180.5" width="11" height="10" fill="none" stroke="#3a8ad0" stroke-width="1.2"/><path d="M1605.5 180.5L1608.5 177.5H1619.5V187.5L1616.5 190.5M1616.5 180.5L1619.5 177.5" fill="none" stroke="#3a8ad0" stroke-width="1.2"/><rect x="1607.5" y="182.5" width="7" height="6" fill="none" stroke="#3a8ad0" stroke-width="0.8"/><rect x="1626.5" y="175.5" width="17" height="17" rx="2" fill="#a8d3f5" stroke="#3d9be9"/><rect x="1628.5" y="177.5" width="13" height="13" fill="#c8c8c8" stroke="#777"/><path d="M1635 188V180" stroke="#3a8ad0" stroke-width="1"/><path d="M1635 188L1630.5 185.5" stroke="#4caf50" stroke-width="1"/><path d="M1635 188L1640 185" stroke="#e0245e" stroke-width="1"/><rect x="1649.5" y="175.5" width="17" height="17" rx="2" fill="#a8d3f5" stroke="#3d9be9"/><rect x="1651.5" y="177.5" width="13" height="13" fill="#c8c8c8" stroke="#777"/><path d="M1654.5 178V190M1658 178V190M1661.5 178V190M1652 180.5H1664M1652 184H1664M1652 187.5H1664" stroke="#3a8ad0" stroke-width="1"/><path d="M1673.5 176V191" stroke="#ccc"/><path d="M1681.5 178.5L1683 176.5H1691.5L1694.5 179.5V182H1684L1681.5 180Z" fill="#e6e6e6" stroke="#9a9a9a" stroke-width="0.9"/><rect x="1684.3" y="179.8" width="10.5" height="3.6" fill="#a8cdf0" stroke="#3a8ad0" stroke-width="1"/><circle cx="1689.5" cy="188.6" r="3" fill="none" stroke="#e0245e" stroke-width="1.3"/><path d="M1687.5 190.6L1691.5 186.6" stroke="#e0245e" stroke-width="1.2"/><path d="M1712 176.5C1716.5 176.5 1719.5 180 1719.5 184C1719.5 188.5 1716 191.5 1712 191.5C1707 191.5 1704.5 188 1704.5 184.5C1704.5 182.5 1706 181.8 1707.5 182.3C1709 182.8 1709.8 181.5 1709 180C1708.3 178.2 1709.5 176.5 1712 176.5Z" fill="#e0e0e0" stroke="#8a8a8a" stroke-width="1"/><circle cx="1714.5" cy="180" r="1.2" fill="#3a8ad0"/><circle cx="1717" cy="183.5" r="1.2" fill="#e8572a"/><circle cx="1715.5" cy="187.3" r="1.2" fill="#f0b020"/><circle cx="1711.8" cy="188.8" r="1.2" fill="#e0245e"/><circle cx="1708" cy="187" r="1.1" fill="#e8572a"/><path d="M1725.1 182H1734.1L1729.6 186.5Z" fill="#111"/><path d="M1744.5 176V191" stroke="#ccc"/><path d="M1766.76 185.31A7 7 0 0 1 1763.18 189.74L1759.74 186.49Z" fill="#3a8ad0"/><path d="M1761.81 190.26A7 7 0 0 1 1756.19 189.37L1757.28 184.77Z" fill="#3a8ad0"/><path d="M1755.05 188.45A7 7 0 0 1 1753.01 183.13L1757.54 181.78Z" fill="#3a8ad0"/><path d="M1753.24 181.69A7 7 0 0 1 1756.82 177.26L1760.26 180.51Z" fill="#3a8ad0"/><path d="M1758.19 176.74A7 7 0 0 1 1763.81 177.63L1762.72 182.23Z" fill="#3a8ad0"/><path d="M1764.95 178.55A7 7 0 0 1 1766.99 183.87L1762.46 185.22Z" fill="#3a8ad0"/><path d="M1773.9 182H1782.9L1778.4 186.5Z" fill="#111"/><path d="M1793 180H1795.4L1796.5 177.9H1803.5L1804.6 180H1809V189.8H1793Z" fill="#3a8ad0"/><circle cx="1801.5" cy="184.6" r="3.3" fill="none" stroke="#fff" stroke-width="1.3"/><rect x="1794.3" y="181.2" width="1.4" height="1.2" fill="#fff"/><rect x="1819.5" y="176.5" width="9" height="4" fill="#fff" stroke="#3a8ad0" stroke-width="1.1"/><rect x="1817.3" y="180.3" width="13.4" height="7.6" rx="1.5" fill="#c6d9ee" stroke="#3a8ad0" stroke-width="1.2"/><rect x="1819.5" y="185.5" width="9" height="6" fill="#fff" stroke="#3a8ad0" stroke-width="1.1"/><path d="M1826.5 182.3H1828.5" stroke="#3a8ad0" stroke-width="0.9"/><path d="M867 969L872 979" stroke="#555" stroke-width="1.2"/><path d="M869 978L874 976L878 985L870 983Z" fill="#f0a040"/><rect x="886.5" y="968.5" width="17" height="17" rx="2" fill="#a8d3f5" stroke="#3d9be9"/><rect x="889.5" y="971.5" width="12" height="11" fill="#fff" stroke="#3a8ad0"/><path d="M889.5 973.5H901.5" stroke="#3a8ad0"/><path d="M891.5 976.5H899.5V981.5H891.5Z M891.5 976.5L895.5 979.5L899.5 976.5" fill="none" stroke="#3a8ad0" stroke-width="0.8"/></svg>
<div class="a" style="left:9px;top:540px;width:407px;height:18px;background:#c9e3f8"></div>
<div class="t" style="left:51.0px;top:200.8px;font-size:12px;color:#111;">ForES2.mph&nbsp;<i>(root)</i></div>
<div class="t" style="left:71.0px;top:218.8px;font-size:12px;color:#111;">Global Definitions</div>
<div class="t" style="left:91.0px;top:236.8px;font-size:12px;color:#111;">Parameters 1</div>
<div class="t" style="left:91.0px;top:254.8px;font-size:12px;color:#111;">Materials</div>
<div class="t" style="left:71.0px;top:272.8px;font-size:12px;color:#111;">Component 1&nbsp;<i>(comp1)</i></div>
<div class="t" style="left:91.0px;top:290.8px;font-size:12px;color:#111;">Definitions</div>
<div class="t" style="left:91.0px;top:308.8px;font-size:12px;color:#111;">Geometry 1</div>
<div class="t" style="left:111.0px;top:326.8px;font-size:12px;color:#111;">Work Plane 1&nbsp;<i>(wp1)</i></div>
<div class="t" style="left:131.0px;top:344.8px;font-size:12px;color:#111;">Plane Geometry</div>
<div class="t" style="left:151.0px;top:362.8px;font-size:12px;color:#111;">Square 1&nbsp;<i>(sq1)</i></div>
<div class="t" style="left:151.0px;top:380.8px;font-size:12px;color:#111;">Square 2&nbsp;<i>(sq2)</i></div>
<div class="t" style="left:151.0px;top:398.8px;font-size:12px;color:#111;">Union 1&nbsp;<i>(uni1)</i></div>
<div class="t" style="left:151.0px;top:416.8px;font-size:12px;color:#111;">Square 3&nbsp;<i>(sq3)</i></div>
<div class="t" style="left:151.0px;top:434.8px;font-size:12px;color:#111;">Square 4&nbsp;<i>(sq4)</i></div>
<div class="t" style="left:151.0px;top:452.8px;font-size:12px;color:#111;">Union 2&nbsp;<i>(uni2)</i></div>
<div class="t" style="left:151.0px;top:470.8px;font-size:12px;color:#111;">Offset 1&nbsp;<i>(off1)</i></div>
<div class="t" style="left:151.0px;top:488.8px;font-size:12px;color:#111;">Split 1&nbsp;<i>(spl1)</i></div>
<div class="t" style="left:131.0px;top:506.8px;font-size:12px;color:#111;">View 2</div>
<div class="t" style="left:111.0px;top:524.8px;font-size:12px;color:#111;">Extrude 1&nbsp;<i>(ext1)</i></div>
<div class="t" style="left:111.0px;top:542.8px;font-size:12px;color:#111;">Loft 1&nbsp;<i>(loft1)</i></div>
<div class="t" style="left:111.0px;top:560.8px;font-size:12px;color:#111;">Loft 2&nbsp;<i>(loft2)</i></div>
<div class="t" style="left:111.0px;top:578.8px;font-size:12px;color:#111;">Form Union&nbsp;<i>(fin)</i></div>
<div class="t" style="left:91.0px;top:596.8px;font-size:12px;color:#111;">Materials</div>
<div class="t" style="left:91.0px;top:614.8px;font-size:12px;color:#111;">Electrostatics&nbsp;<i>(es)</i></div>
<div class="t" style="left:91.0px;top:632.8px;font-size:12px;color:#111;">Mesh 1</div>
<div class="t" style="left:71.0px;top:650.8px;font-size:12px;color:#111;">Study 1</div>
<div class="t" style="left:71.0px;top:668.8px;font-size:12px;color:#111;">Results</div>
<svg class="a" style="left:0px;top:190px;" width="420" height="500" viewBox="0 0 420 500"><g transform="translate(0,-190)"><path d="M21.5 202.5V209.5H14.5Z" fill="#404040"/><g transform="translate(29,199)"><path d="M0.6 7.5L5.2 1.9H10.2L15.9 7.7L10.2 13.7L5.2 13Z" fill="#3a8ad0"/><path d="M0.6 7.5H5.4L10.2 1.3M5.4 7.5L10.2 14" fill="none" stroke="#fff" stroke-width="1.2"/></g><path d="M41.5 220.5V227.5H34.5Z" fill="#404040"/><g transform="translate(49,217)"><g fill="none" stroke="#3a8ad0" stroke-width="1.1"><circle cx="8" cy="8" r="7"/><ellipse cx="8" cy="8" rx="3" ry="7"/><path d="M8 1V15M1.5 5.5H14.5M1.5 10.5H14.5"/></g></g><g transform="translate(69,235)"><text x="0.5" y="12" font-family="Liberation Sans" font-size="12" fill="#3a8ad0">P</text><path d="M10.5 7V14" stroke="#3a8ad0" stroke-width="1.2"/><circle cx="10.5" cy="4.8" r="0.8" fill="#3a8ad0"/></g><g transform="translate(69,253)"><circle cx="8" cy="8" r="7.3" fill="none" stroke="#e8962a" stroke-width="1.1"/><rect x="3" y="6" width="2.6" height="2.6" fill="#e8962a"/><rect x="6.7" y="4" width="2.6" height="2.6" fill="#e8962a"/><rect x="10.4" y="6" width="2.6" height="2.6" fill="#e8962a"/><rect x="3" y="9" width="2.6" height="2.6" fill="#e8962a"/><rect x="6.7" y="7" width="2.6" height="2.6" fill="#e8962a"/><rect x="10.4" y="9" width="2.6" height="2.6" fill="#e8962a"/><rect x="6.7" y="10" width="2.6" height="2.6" fill="#e8962a"/></g><path d="M41.5 274.5V281.5H34.5Z" fill="#404040"/><g transform="translate(49,271)"><path d="M0.5 2.5L2.5 0.5H12.5L14 2V14H2.5L0.5 12Z" fill="#3a8ad0"/><path d="M1 2L3 3.5H13.5M3 3.5V14" fill="none" stroke="#fff" stroke-width="0.9"/></g><path d="M56.5 292.5L61 297L56.5 301.5Z" fill="none" stroke="#888" stroke-width="1"/><g transform="translate(69,292)"><path d="M3.5 1.5H12.5M3.5 5H12.5M3.5 8.5H12.5" stroke="#3a8ad0" stroke-width="1.6"/></g><path d="M61.5 310.5V317.5H54.5Z" fill="#404040"/><g transform="translate(69,307)"><rect x="0.5" y="0.5" width="15" height="15" fill="#fff" stroke="#e8572a" stroke-width="1.1"/><path d="M2.2 14.4L8.6 1.5L14.6 14.4M1.1 1.8Q3.2 6.5 4.9 7.6Q8.5 10.6 11.5 7.8" fill="none" stroke="#e8572a" stroke-width="0.9"/></g><path d="M81.5 328.5V335.5H74.5Z" fill="#404040"/><g transform="translate(89,325)"><path d="M3.2 2V14.2M12.8 2V14.2" stroke="#6a6a6a" stroke-width="1.1"/><ellipse cx="8" cy="2" rx="4.8" ry="1.6" fill="#fff" stroke="#6a6a6a" stroke-width="1.1"/><ellipse cx="8" cy="14.2" rx="4.8" ry="1.6" fill="#fff" stroke="#6a6a6a" stroke-width="1.1"/><path d="M-0.1 4.1H8.4L16 10.8H6Z" fill="#f08a5c" opacity="0.9"/><ellipse cx="8.5" cy="7.5" rx="3.2" ry="1.2" fill="none" stroke="#e8572a" stroke-width="1"/></g><path d="M101.5 346.5V353.5H94.5Z" fill="#404040"/><g transform="translate(109,343)"><rect x="0.5" y="0.5" width="15" height="15" fill="#fff" stroke="#4caf50" stroke-width="1.1"/><path d="M2.2 14.4L8.6 1.5L14.6 14.4M1.1 1.8Q3.2 6.5 4.9 7.6Q8.5 10.6 11.5 7.8" fill="none" stroke="#e8572a" stroke-width="0.9"/></g><g transform="translate(129,361)"><rect x="1.5" y="1.5" width="12" height="12" fill="#e0e0e0" stroke="#e8572a" stroke-width="1.1"/><rect x="0" y="11.5" width="3" height="3" fill="#e8572a"/></g><g transform="translate(129,379)"><rect x="1.5" y="1.5" width="12" height="12" fill="#e0e0e0" stroke="#e8572a" stroke-width="1.1"/><rect x="0" y="11.5" width="3" height="3" fill="#e8572a"/></g><g transform="translate(129,397)"><rect x="0.5" y="0.5" width="10" height="9" fill="#f5a582" stroke="#e8572a" stroke-width="1"/><rect x="4.5" y="4.5" width="11" height="10" fill="#f5a582" stroke="#e8572a" stroke-width="1"/><path d="M4.5 9.5H10.5V4.5" fill="none" stroke="#e8572a" stroke-width="0.8"/></g><g transform="translate(129,415)"><rect x="1.5" y="1.5" width="12" height="12" fill="#e0e0e0" stroke="#e8572a" stroke-width="1.1"/><rect x="0" y="11.5" width="3" height="3" fill="#e8572a"/></g><g transform="translate(129,433)"><rect x="1.5" y="1.5" width="12" height="12" fill="#e0e0e0" stroke="#e8572a" stroke-width="1.1"/><rect x="0" y="11.5" width="3" height="3" fill="#e8572a"/></g><g transform="translate(129,451)"><rect x="0.5" y="0.5" width="10" height="9" fill="#f5a582" stroke="#e8572a" stroke-width="1"/><rect x="4.5" y="4.5" width="11" height="10" fill="#f5a582" stroke="#e8572a" stroke-width="1"/><path d="M4.5 9.5H10.5V4.5" fill="none" stroke="#e8572a" stroke-width="0.8"/></g><g transform="translate(129,469)"><path d="M1 13Q3 7 7 6Q11 5 12 0.5" fill="none" stroke="#888" stroke-width="1.1"/><path d="M3.5 15Q5 10 9 8.5Q13 7 14.5 2" fill="none" stroke="#e8572a" stroke-width="1.1"/></g><g transform="translate(129,487)"><rect x="0.5" y="0.5" width="15" height="15" fill="#fff" stroke="#4caf50" stroke-width="1.1"/><path d="M3.5 6.5L8.5 1.8H14L8.5 7.4L2.2 9.1Z" fill="#e8572a"/><path d="M5.5 6.5L12 2.5" stroke="#fbd0bd" stroke-width="0.7" stroke-dasharray="1 0.8"/><path d="M1.5 14L6.5 9M2.5 14.5L7.5 9.5" stroke="#777" stroke-width="0.7"/></g><path d="M96.5 508.5L101 513L96.5 517.5Z" fill="none" stroke="#888" stroke-width="1"/><g transform="translate(109,505)"><path d="M2.5 1.5V14.5" stroke="#4caf50" stroke-width="1"/><path d="M2.5 14.5H13" stroke="#e0245e" stroke-width="1.1"/><path d="M0.8 3L2.5 0.5L4.2 3Z" fill="#4caf50"/><path d="M12.5 12.8L15 14.5L12.5 16.2Z" fill="#e0245e"/><text x="4" y="9.5" font-family="Liberation Sans" font-size="9.5" fill="#9aa0a6">xy</text></g><g transform="translate(89,523)"><rect x="0.5" y="0.5" width="15" height="15" fill="#eef0f0" stroke="#4caf50" stroke-width="1.1"/><path d="M1.5 12H7M12.5 1.5V8" stroke="#555" stroke-width="0.9"/><path d="M3.5 6.5L6.5 3.5L13.5 10.5L10.5 13.5Z" fill="#fff" stroke="#e8572a" stroke-width="0.9"/><path d="M5 5L12 12" stroke="#e8572a" stroke-width="0.6"/><rect x="10.5" y="10.5" width="4" height="4" fill="#f5b49a" stroke="#e8572a" stroke-width="0.8"/></g><g transform="translate(89,541)"><g fill="none" stroke="#a9b4c0" stroke-width="1.1" stroke-linejoin="round"><path d="M1.5 1.5H8.5L13.5 5.5H6.5Z"/><path d="M6.5 5.5H13.5L15 7.5L12.5 10.5H5.5L3 7.5Z"/><path d="M5.5 10.5H12.5L8.5 15H3Q1.5 14 3 12.5Z"/></g></g><g transform="translate(89,559)"><g fill="none" stroke="#c8c8c8" stroke-width="1.1" stroke-linejoin="round"><path d="M1.5 1.5H8.5L13.5 5.5H6.5Z"/><path d="M6.5 5.5H13.5L15 7.5L12.5 10.5H5.5L3 7.5Z"/><path d="M5.5 10.5H12.5L8.5 15H3Q1.5 14 3 12.5Z"/></g></g><g transform="translate(89,577)"><rect x="0.5" y="2.5" width="10" height="9" fill="#e6e6e6" stroke="#b8b8b8"/><rect x="3.5" y="6.5" width="11" height="9" fill="#e6e6e6" stroke="#b8b8b8"/><path d="M13 0V5M10.5 2.5H15.5M11 0.8L15 4.2M15 0.8L11 4.2" stroke="#555" stroke-width="0.9"/></g><g transform="translate(69,595)"><rect x="1.2" y="4.7" width="3.6" height="3.6" fill="#f5a623"/><rect x="1.2" y="9.2" width="3.6" height="3.6" fill="#ee8a1e"/><rect x="6.3999999999999995" y="0.7" width="3.6" height="3.6" fill="#f5a623"/><rect x="6.3999999999999995" y="5.4" width="3.6" height="3.6" fill="#ee8a1e"/><rect x="6.3999999999999995" y="10.2" width="3.6" height="3.6" fill="#d47419"/><rect x="11.5" y="4.7" width="3.6" height="3.6" fill="#ee8a1e"/><rect x="11.5" y="9.2" width="3.6" height="3.6" fill="#d47419"/></g><path d="M56.5 616.5L61 621L56.5 625.5Z" fill="none" stroke="#888" stroke-width="1"/><g transform="translate(69,613)"><path d="M1 1.2L11 6.9L7.5 8L15 15.2L2.1 9L5.9 8Z" fill="#3e7fc8"/></g><g transform="translate(69,631)"><path d="M8 1L15.6 13.8H0.4Z" fill="#dadada" stroke="#7a7a7a" stroke-width="1.2" stroke-linejoin="round"/><path d="M5.4 5.3H10.6M2.9 9.6H13.1M5.4 5.3L10.6 13.8M10.6 5.3L5.4 13.8M2.9 9.6L5.4 13.8M13.1 9.6L10.6 13.8M8 5.3V13.8" stroke="#8a8a8a" stroke-width="0.6"/></g><path d="M36.5 652.5L41 657L36.5 661.5Z" fill="none" stroke="#888" stroke-width="1"/><g transform="translate(49,649)"><g fill="none" stroke="#259cbd" stroke-width="1.1"><path d="M0.5 7.5Q1.2 4.6 2.8 5L5.9 8"/><circle cx="8.4" cy="9" r="2.6"/><circle cx="13.3" cy="9" r="2.6"/><path d="M15.9 8.2Q15.6 6 11.6 4.3Q10.6 4.4 10.8 6"/></g></g><path d="M36.5 670.5L41 675L36.5 679.5Z" fill="none" stroke="#888" stroke-width="1"/><g transform="translate(49,667)"><g transform="translate(0,1) scale(0.545)"><path d="M0.2 12.2H3L11 18.5V25.8L0.2 18.6Z" fill="#86878b"/><rect x="3.5" y="0.5" width="15" height="15.5" fill="#fff" stroke="#6e6e6e" stroke-width="1.6"/><rect x="7.5" y="3.5" width="15" height="15.5" fill="#fff" stroke="#6e6e6e" stroke-width="1.6"/><rect x="11.5" y="6.5" width="15" height="15.5" fill="#fff" stroke="#6e6e6e" stroke-width="1.6"/><rect x="13.3" y="8.3" width="11.8" height="9" fill="#b04fa0"/><rect x="10.7" y="19.3" width="18.3" height="6.5" fill="#fff" stroke="#6e6e6e" stroke-width="1.6"/></g></g></g></svg>
<div class="t" style="left:434.5px;top:180.8px;font-size:15px;color:#4a7cc6;">Loft</div>
<div class="t" style="left:455.5px;top:201.8px;font-size:12px;color:#1a1a1a;letter-spacing:-0.25px">Build Selected</div>
<div class="t" style="left:574.5px;top:201.8px;font-size:12px;color:#1a1a1a;">Build All Objects</div>
<div class="a" style="left:833px;top:221px;width:17px;height:907px;background:#f3f3f3"></div>
<div class="a" style="left:833px;top:238px;width:17px;height:652px;background:#e3e3e3"></div>
<div class="t" style="left:433.0px;top:235.8px;font-size:12px;color:#1a1a1a;">Label:</div>
<div class="a" style="left:474px;top:232px;width:325px;height:19px;background:#fff;border:1px solid #cfcfcf;box-sizing:border-box"></div>
<div class="t" style="left:477.0px;top:235.8px;font-size:12px;color:#1a1a1a;">Loft 1</div>
<div class="a" style="left:807px;top:230px;width:21px;height:22px;background:#efefef;border:1px solid #d4d4d4;border-radius:2px;box-sizing:border-box"></div>
<div class="a" style="left:428px;top:262px;width:405px;height:25px;background:#ebebeb"></div>
<svg class="a" style="left:432px;top:270px;" width="12" height="8" viewBox="0 0 12 8"><path d="M1 1.5H10L5.5 6.5Z" fill="#505050"/></svg>
<div class="t" style="left:454.5px;top:267.7px;font-size:13px;color:#000;">General</div>
<div class="a" style="left:434px;top:297px;width:14px;height:13px;background:#f7f7f7;border:1px solid #8c8c8c;box-sizing:border-box"></div>
<div class="t" style="left:453.0px;top:296.8px;font-size:12px;color:#000;">Periodic loft</div>
<div class="a" style="left:434px;top:318px;width:14px;height:13px;background:#f7f7f7;border:1px solid #8c8c8c;box-sizing:border-box"></div>
<svg class="a" style="left:434px;top:318px;" width="14" height="13" viewBox="0 0 14 13"><path d="M3 6.5L5.8 9.5L11 3" fill="none" stroke="#222" stroke-width="1.6"/></svg>
<div class="t" style="left:453.0px;top:318.1px;font-size:12px;color:#000;">Unite with input objects</div>
<div class="t" style="left:433.0px;top:342.8px;font-size:12px;color:#000;">Object type:</div>
<div class="a" style="left:535px;top:338px;width:293px;height:21px;background:#ececec;border:1px solid #cdcdcd;border-radius:2px;box-sizing:border-box"></div>
<div class="t" style="left:548.0px;top:343.3px;font-size:12px;color:#1a1a1a;">Solid</div>
<svg class="a" style="left:812px;top:345px;" width="10" height="6" viewBox="0 0 10 6"><path d="M0.5 0.5H9.5L5 5.5Z" fill="#222"/></svg>
<div class="a" style="left:434px;top:366px;width:14px;height:13px;background:#f7f7f7;border:1px solid #8c8c8c;box-sizing:border-box"></div>
<div class="t" style="left:453.0px;top:365.8px;font-size:12px;color:#000;">Keep intermediate profile faces</div>
<div class="t" style="left:433.0px;top:390.8px;font-size:12px;color:#000;">Face partitioning:</div>
<div class="a" style="left:535px;top:386px;width:293px;height:21px;background:#ececec;border:1px solid #cdcdcd;border-radius:2px;box-sizing:border-box"></div>
<div class="t" style="left:548.0px;top:391.3px;font-size:12px;color:#1a1a1a;">Minimal</div>
<svg class="a" style="left:812px;top:393px;" width="10" height="6" viewBox="0 0 10 6"><path d="M0.5 0.5H9.5L5 5.5Z" fill="#222"/></svg>
<div class="a" style="left:428px;top:418px;width:405px;height:25px;background:#ebebeb"></div>
<svg class="a" style="left:432px;top:426px;" width="12" height="8" viewBox="0 0 12 8"><path d="M1 1.5H10L5.5 6.5Z" fill="#505050"/></svg>
<div class="t" style="left:454.5px;top:423.7px;font-size:13px;color:#000;">Profiles</div>
<div class="t" style="left:433.0px;top:453.8px;font-size:12px;color:#000;">Profile objects:</div>
<div class="a" style="left:432px;top:473px;width:40px;height:40px;background:#f4f4f4;border:1px solid #d8d8d8;border-radius:2px;box-sizing:border-box"></div>
<div class="a" style="left:479px;top:473px;width:283px;height:120px;background:#fff;border:1px solid #d0d0d0;border-bottom:3px solid #d0d0d0;box-sizing:border-box"></div>
<div class="a" style="left:428px;top:604px;width:405px;height:25px;background:#ebebeb"></div>
<svg class="a" style="left:432px;top:612px;" width="12" height="8" viewBox="0 0 12 8"><path d="M1 1.5H10L5.5 6.5Z" fill="#505050"/></svg>
<div class="t" style="left:454.5px;top:609.7px;font-size:13px;color:#000;">Start Profile</div>
<div class="t" style="left:433.0px;top:643.3px;font-size:12px;color:#000;">Geometric entity level:</div>
<div class="a" style="left:561px;top:638px;width:267px;height:21px;background:#ececec;border:1px solid #cdcdcd;border-radius:2px;box-sizing:border-box"></div>
<div class="t" style="left:574.0px;top:643.3px;font-size:12px;color:#1a1a1a;">Boundary</div>
<svg class="a" style="left:812px;top:645px;" width="10" height="6" viewBox="0 0 10 6"><path d="M0.5 0.5H9.5L5 5.5Z" fill="#222"/></svg>
<div class="t" style="left:433.0px;top:670.3px;font-size:12px;color:#000;">Start profile:</div>
<div class="a" style="left:561px;top:665px;width:267px;height:21px;background:#ececec;border:1px solid #cdcdcd;border-radius:2px;box-sizing:border-box"></div>
<div class="t" style="left:574.0px;top:670.3px;font-size:12px;color:#1a1a1a;">Manual</div>
<svg class="a" style="left:812px;top:672px;" width="10" height="6" viewBox="0 0 10 6"><path d="M0.5 0.5H9.5L5 5.5Z" fill="#222"/></svg>
<div class="a" style="left:432px;top:692px;width:40px;height:40px;background:#f4f4f4;border:1px solid #d8d8d8;border-radius:2px;box-sizing:border-box"></div>
<div class="a" style="left:479px;top:692px;width:283px;height:119px;background:#fff;border:1px solid #d0d0d0;border-bottom:3px solid #d0d0d0;box-sizing:border-box"></div>
<svg class="a" style="left:485px;top:697px;" width="8" height="8" viewBox="0 0 8 8"><path d="M7 1V7H1Z" fill="#404040"/></svg>
<div class="t" style="left:506.0px;top:695.5px;font-size:12px;color:#000;">ext1</div>
<div class="t" style="left:526.5px;top:714.3px;font-size:12px;color:#000;">11</div>
<div class="t" style="left:433.0px;top:823.3px;font-size:12px;color:#000;">Loft direction:</div>
<div class="a" style="left:517px;top:818px;width:311px;height:21px;background:#ececec;border:1px solid #cdcdcd;border-radius:2px;box-sizing:border-box"></div>
<div class="t" style="left:530.0px;top:823.3px;font-size:12px;color:#1a1a1a;">Not prescribed</div>
<svg class="a" style="left:812px;top:825px;" width="10" height="6" viewBox="0 0 10 6"><path d="M0.5 0.5H9.5L5 5.5Z" fill="#222"/></svg>
<div class="a" style="left:428px;top:850px;width:405px;height:25px;background:#ebebeb"></div>
<svg class="a" style="left:432px;top:858px;" width="12" height="8" viewBox="0 0 12 8"><path d="M1 1.5H10L5.5 6.5Z" fill="#505050"/></svg>
<div class="t" style="left:454.5px;top:855.7px;font-size:13px;color:#000;">End Profile</div>
<div class="t" style="left:433.0px;top:888.8px;font-size:12px;color:#000;">Geometric entity level:</div>
<div class="a" style="left:561px;top:884px;width:267px;height:21px;background:#ececec;border:1px solid #cdcdcd;border-radius:2px;box-sizing:border-box"></div>
<div class="t" style="left:574.0px;top:889.3px;font-size:12px;color:#1a1a1a;">Boundary</div>
<svg class="a" style="left:812px;top:891px;" width="10" height="6" viewBox="0 0 10 6"><path d="M0.5 0.5H9.5L5 5.5Z" fill="#222"/></svg>
<div class="t" style="left:433.0px;top:916.8px;font-size:12px;color:#000;">End profile:</div>
<div class="a" style="left:561px;top:911px;width:267px;height:21px;background:#ececec;border:1px solid #cdcdcd;border-radius:2px;box-sizing:border-box"></div>
<div class="t" style="left:574.0px;top:916.3px;font-size:12px;color:#1a1a1a;">Manual</div>
<svg class="a" style="left:812px;top:918px;" width="10" height="6" viewBox="0 0 10 6"><path d="M0.5 0.5H9.5L5 5.5Z" fill="#222"/></svg>
<div class="a" style="left:433px;top:938px;width:38px;height:38px;background:#9fd0f7;border:1px solid #3f96e0;border-radius:2px;box-sizing:border-box"></div>
<div class="a" style="left:479px;top:938px;width:283px;height:120px;background:#fff;border:1px solid #d0d0d0;border-bottom:3px solid #d0d0d0;box-sizing:border-box"></div>
<div class="a" style="left:480px;top:939px;width:281px;height:18px;background:#dcdcdc"></div>
<svg class="a" style="left:485px;top:943px;" width="8" height="8" viewBox="0 0 8 8"><path d="M7 1V7H1Z" fill="#404040"/></svg>
<div class="t" style="left:506.0px;top:941.8px;font-size:12px;color:#000;">ext1</div>
<div class="t" style="left:526.0px;top:959.8px;font-size:12px;color:#000;">2</div>
<div class="t" style="left:526.0px;top:977.8px;font-size:12px;color:#000;">10</div>
<div class="t" style="left:433.0px;top:1068.8px;font-size:12px;color:#000;">Loft direction:</div>
<div class="a" style="left:517px;top:1064px;width:311px;height:21px;background:#ececec;border:1px solid #cdcdcd;border-radius:2px;box-sizing:border-box"></div>
<div class="t" style="left:530.0px;top:1069.3px;font-size:12px;color:#1a1a1a;">Not prescribed</div>
<svg class="a" style="left:812px;top:1071px;" width="10" height="6" viewBox="0 0 10 6"><path d="M0.5 0.5H9.5L5 5.5Z" fill="#222"/></svg>
<div class="a" style="left:428px;top:1096px;width:405px;height:25px;background:#ebebeb"></div>
<svg class="a" style="left:433px;top:1102px;" width="8" height="12" viewBox="0 0 8 12"><path d="M1 1L6 6L1 11Z" fill="none" stroke="#808080"/></svg>
<div class="t" style="left:454.5px;top:1101.7px;font-size:13px;color:#000;">Guide Curves</div>
<svg class="a" style="left:857px;top:197px;" width="1059" height="729" viewBox="0 0 1059 729"><defs><linearGradient id="gbg" x1="0" y1="0" x2="0" y2="1"><stop offset="0" stop-color="#f8fafe"/><stop offset="1" stop-color="#e5f0fc"/></linearGradient></defs><rect x="0" y="0" width="1059" height="729" fill="url(#gbg)"/><g transform="translate(-857,-197)"><path d="M927.1 340.8 L1754.2 315.2 L1878.8 519.6" fill="none" stroke="#8a8a8a" stroke-width="1"/><path d="M975.5 392.0 L1786.6 369.4" fill="none" stroke="#8a8a8a" stroke-width="1"/><path d="M1022.0 440.4 L1818.0 422.0" fill="none" stroke="#8a8a8a" stroke-width="1"/><path d="M1069.0 486.9 L1849.0 471.8" fill="none" stroke="#8a8a8a" stroke-width="1"/><path d="M1115.0 536.0 L1878.8 519.6" fill="none" stroke="#8a8a8a" stroke-width="1"/><path d="M1039.4 337.7 L1200.0 530.0" fill="none" stroke="#8a8a8a" stroke-width="1"/><path d="M1269.4 331.3 L1428.2 526.5" fill="none" stroke="#8a8a8a" stroke-width="1"/><path d="M1508.2 323.0 L1660.0 523.0" fill="none" stroke="#8a8a8a" stroke-width="1"/><path d="M1240.0 561.5 L1882.2 551.9 L1861.1 775.2 L1082.4 775.0" fill="none" stroke="#8a8a8a" stroke-width="1"/><path d="M1250.0 668.0 L1871.5 662.7" fill="none" stroke="#8a8a8a" stroke-width="1"/><path d="M1433.6 559.0 L1405.5 774.7" fill="none" stroke="#8a8a8a" stroke-width="1"/><path d="M1205.0 670.0 L1187.8 775.0" fill="none" stroke="#8a8a8a" stroke-width="1"/><path d="M1640.0 560.0 L1630.5 775.0" fill="none" stroke="#8a8a8a" stroke-width="1"/><path d="M1100.0 541.0 L900.1 365.3 L861.6 590.5 L1051.4 765.7 L1075.0 620.0" fill="none" stroke="#8a8a8a" stroke-width="1"/><path d="M880.7 478.3 L1060.0 650.0" fill="none" stroke="#8a8a8a" stroke-width="1"/><path d="M948.8 416.0 L912.2 637.8" fill="none" stroke="#8a8a8a" stroke-width="1"/><path d="M995.8 463.7 L960.0 682.8" fill="none" stroke="#8a8a8a" stroke-width="1"/><path d="M1043.0 511.0 L1007.0 725.0" fill="none" stroke="#8a8a8a" stroke-width="1"/><path d="M1034.0 433.4 L1091.0 431.4 L1060.0 637.5 L1001.4 637.8Z" fill="#a0a0a0" stroke="#1e1e1e" stroke-width="1" stroke-linejoin="round"/><path d="M1099.8 380.2 L1236.8 376.4 L1206.5 590.0 L1067.0 591.0Z" fill="#a0a0a0" stroke="#1e1e1e" stroke-width="1" stroke-linejoin="round"/><path d="M1236.8 376.4 L1287.5 435.8 L1263.3 620.7 L1232.8 587.7 L1206.5 588.0Z" fill="#868686" stroke="#1e1e1e" stroke-width="1" stroke-linejoin="round"/><path d="M999.4 590.5 L1232.8 587.7 L1318.6 680.8 L1204.7 682.0 L1246.9 725.0 L1029.0 725.5 L935.6 638.4 L1046.4 637.2Z" fill="#a3a5de" stroke="#1f1fe8" stroke-width="1.1" stroke-linejoin="round"/><path d="M1064.1 608.3 L1203.3 606.9 L1256.7 663.1 L1142.3 663.7 L1186.4 708.1 L1054.3 708.7 L998.9 655.5 L1110.5 654.7Z" fill="none" stroke="#1f1fe8" stroke-width="1.1" stroke-linejoin="round"/><path d="M1568.6 367.2 L1715.4 363.2 L1691.0 582.0 L1541.9 583.4Z" fill="#a0a0a0" stroke="#1e1e1e" stroke-width="1" stroke-linejoin="round"/><path d="M1715.4 363.2 L1818.0 524.7 L1802.0 690.3 L1726.1 581.2 L1691.0 582.0Z" fill="#868686" stroke="#1e1e1e" stroke-width="1" stroke-linejoin="round"/><path d="M1768.3 446.5 L1751.4 614.4" fill="none" stroke="#1e1e1e" stroke-width="1"/><path d="M1475.8 584.3 L1726.1 581.2 L1855.5 767.0 L1622.6 767.0Z" fill="#b8b8b8" stroke="#1e1e1e" stroke-width="1" stroke-linejoin="round"/><path d="M1540.5 603.7 L1689.6 601.7 L1795.9 749.9 L1655.2 749.9Z" fill="#b8b8b8" stroke="#1e1e1e" stroke-width="1" stroke-linejoin="round"/><text x="1036.8" y="326" font-family="Liberation Sans" font-size="12" text-anchor="middle" fill="#111">3</text><text x="1267" y="318" font-family="Liberation Sans" font-size="12" text-anchor="middle" fill="#111">2</text><text x="1505.4" y="311.5" font-family="Liberation Sans" font-size="12" text-anchor="middle" fill="#111">1</text><text x="1752.8" y="304" font-family="Liberation Sans" font-size="12" text-anchor="middle" fill="#111">0</text><text x="1322" y="295" font-family="Liberation Sans" font-size="12" text-anchor="middle" fill="#111">m</text><text x="885.5" y="365" font-family="Liberation Sans" font-size="12" text-anchor="middle" fill="#111">1</text><text x="861.5" y="476" font-family="Liberation Sans" font-size="12" text-anchor="middle" fill="#111">0.5</text><text x="895.4" y="652.5" font-family="Liberation Sans" font-size="12" text-anchor="middle" fill="#111">0.5</text><text x="948.5" y="698" font-family="Liberation Sans" font-size="12" text-anchor="middle" fill="#111">1</text><text x="923.5" y="717" font-family="Liberation Sans" font-size="12" text-anchor="middle" fill="#111">m</text><text x="990.4" y="741" font-family="Liberation Sans" font-size="12" text-anchor="middle" fill="#111">1.5</text><text x="1039.4" y="782" font-family="Liberation Sans" font-size="12" text-anchor="middle" fill="#111">2</text><path d="M901 882L903.8 861" stroke="#4a86c6" stroke-width="2.2"/><path d="M900.5 863L904.3 853.5L907 863Z" fill="#4a86c6"/><path d="M901 882L880 882" stroke="#4caf50" stroke-width="2.2"/><path d="M882 879L873.5 882L882 885Z" fill="#4caf50"/><path d="M901 882L908 889.5" stroke="#e0245e" stroke-width="2.2"/><circle cx="908" cy="889.7" r="3" fill="#e0245e"/><text x="906" y="850" font-family="Liberation Sans" font-size="13" text-anchor="middle" fill="#111">z</text><text x="865.5" y="885.5" font-family="Liberation Sans" font-size="13" text-anchor="middle" fill="#111">y</text><text x="913.3" y="898.7" font-family="Liberation Sans" font-size="13" text-anchor="middle" fill="#111">x</text><path d="M1890 206L1906 202L1910 219L1895 222Z" fill="#ececec"/><rect x="1893.5" y="206" width="14" height="11" rx="3" fill="#1d3d9a"/><rect x="1900" y="208" width="6" height="7" fill="#3fa0e8"/><path d="M1895.5 207.5L1902.5 211.5L1895.5 215.5Z" fill="#f2e040"/></g><rect x="0.5" y="0.5" width="1058" height="728" fill="none" stroke="#555" stroke-dasharray="2 2"/></svg>
<svg class="a" style="left:0px;top:0px;pointer-events:none" width="1920" height="1160" viewBox="0 0 1920 1160"><path d="M436.8 201.9H446.4L448.8 204.4V213.9H439L436.8 211.5Z" fill="#e2e2e2" stroke="#9a9a9a" stroke-width="1"/><path d="M439.2 204.4V213.9M444 204.4V213.9M439.2 209.2H448.8M436.8 201.9L439.2 204.4H448.8" fill="none" stroke="#9a9a9a" stroke-width="1"/><path d="M436.8 201.9H441.6L444 204.4V209.2H439.2L436.8 206.8Z" fill="#e55a2b"/><path d="M437.2 202.3L439.4 204.6H444M439.4 204.6V209.2" fill="none" stroke="#f6b49a" stroke-width="0.8"/><path d="M535 206H544L539.5 210.5Z" fill="#222"/><path d="M556 201.9H565.6L568 204.3V214.0H557.9L556 211.6Z" fill="#dc5a3a"/><path d="M556.4 202.3L558.4 204.3H568M558.4 204.3V214.0M563.2 204.3V214.0M558.4 209.15000000000003H568M560.8000000000001 201.9L563.2 204.3M556 206.75000000000003L558.4 209.15000000000003" fill="none" stroke="#f4c8b4" stroke-width="0.8"/><path d="M669.9 202.1H679.6999999999999L681.9 204.29999999999998V213.9H671.6L669.9 211.70000000000002Z" fill="#3d7fc0"/><path d="M670.3 202.5L672.1 204.29999999999998H681.9M672.1 204.29999999999998V213.9M677.0 204.29999999999998V213.9M672.1 209.1H681.9M674.8 202.1L677.0 204.29999999999998M669.9 206.9L672.1 209.1" fill="none" stroke="#b8d4ee" stroke-width="0.8"/><path d="M669.5 201.5H675L677 203.5V208.5H671.5L669.5 206.5Z" fill="#bfe6f5" fill-opacity="0.7" stroke="#c8108c" stroke-width="1.1"/><rect x="810.5" y="233.5" width="13" height="13" rx="1.5" fill="#fff" stroke="#777" stroke-width="1"/><rect x="811" y="234" width="12" height="2.5" fill="#ccc"/><path d="M813 239.5H821M813 241.5H821" stroke="#1fa08a" stroke-width="1"/><path d="M809.5 248.5L813 245" stroke="#1fa08a" stroke-width="1.6"/><path d="M810.5 243H814.5V247Z" fill="#1fa08a"/><rect x="437.5" y="486.5" width="29" height="13" rx="2" fill="#ddd" stroke="#3a4a6a" stroke-width="1.2"/><rect x="448" y="490" width="15" height="6" rx="2.5" fill="#bbb"/><rect x="439.5" y="488.5" width="8.5" height="9" fill="#bbb" stroke="#555" stroke-width="0.8"/><rect x="437.5" y="705.5" width="29" height="13" rx="2" fill="#ddd" stroke="#3a4a6a" stroke-width="1.2"/><rect x="448" y="709" width="15" height="6" rx="2.5" fill="#bbb"/><rect x="439.5" y="707.5" width="8.5" height="9" fill="#bbb" stroke="#555" stroke-width="0.8"/><rect x="437.5" y="951.5" width="29" height="13" rx="2" fill="#ddd" stroke="#3a4a6a" stroke-width="1.2"/><rect x="440" y="955" width="15" height="6" rx="2.5" fill="#4caf50"/><rect x="455.5" y="953.5" width="8.5" height="9" fill="#bbb" stroke="#555" stroke-width="0.8"/><path d="M777.5 476.5H783M777.5 476.5V488H780" fill="none" stroke="#999"/><rect x="780.5" y="478.5" width="12" height="13" fill="#fff" stroke="#3a8ad0" stroke-width="1.1"/><path d="M783 482H790M783 484.5H790M783 487H790" stroke="#3a8ad0" stroke-width="0.9"/><path d="M812.5 482.5H822.5M817.5 477.5V487.5" stroke="#aaa" stroke-width="1"/><rect x="778" y="497" width="10" height="12" rx="1" fill="#f5c16c" stroke="#e8a040"/><rect x="780.5" y="495.5" width="5" height="3" rx="1" fill="#fff" stroke="#888" stroke-width="0.8"/><rect x="783.5" y="500.5" width="9" height="10" fill="#fff" stroke="#3a8ad0" stroke-width="1.1"/><path d="M812.5 503H822.5" stroke="#3a8ad0" stroke-width="1.1"/><rect x="780.5" y="518.5" width="8" height="8" fill="none" stroke="#555"/><path d="M784.5 520.5V524.5M782.5 522.5H786.5" stroke="#555"/><path d="M784.5 515.5L783 517H786Z M784.5 529.5L783 528H786Z M777.5 522.5L779 521V524Z M791.5 522.5L790 521V524Z" fill="#3a8ad0"/><rect x="811.5" y="516.5" width="13" height="13" fill="none" stroke="#3a8ad0" stroke-width="1.1" stroke-dasharray="2 1.3"/><path d="M816 519H823V527Z" fill="#3a8ad0"/><path d="M811 515L816 524" stroke="#555" stroke-width="1.1"/><path d="M813 523L818 525L818 530L813 528Z" fill="#e8a040"/><path d="M777.5 695.5H783M777.5 695.5V707H780" fill="none" stroke="#999"/><rect x="780.5" y="697.5" width="12" height="13" fill="#fff" stroke="#3a8ad0" stroke-width="1.1"/><path d="M783 701H790M783 703.5H790M783 706H790" stroke="#3a8ad0" stroke-width="0.9"/><path d="M812.5 701.5H822.5M817.5 696.5V706.5" stroke="#aaa" stroke-width="1"/><rect x="778" y="716" width="10" height="12" rx="1" fill="#f5c16c" stroke="#e8a040"/><rect x="780.5" y="714.5" width="5" height="3" rx="1" fill="#fff" stroke="#888" stroke-width="0.8"/><rect x="783.5" y="719.5" width="9" height="10" fill="#fff" stroke="#3a8ad0" stroke-width="1.1"/><path d="M812.5 722H822.5" stroke="#3a8ad0" stroke-width="1.1"/><rect x="780.5" y="737.5" width="8" height="8" fill="none" stroke="#555"/><path d="M784.5 739.5V743.5M782.5 741.5H786.5" stroke="#555"/><path d="M784.5 734.5L783 736H786Z M784.5 748.5L783 747H786Z M777.5 741.5L779 740V743Z M791.5 741.5L790 740V743Z" fill="#3a8ad0"/><rect x="811.5" y="735.5" width="13" height="13" fill="none" stroke="#3a8ad0" stroke-width="1.1" stroke-dasharray="2 1.3"/><path d="M816 738H823V746Z" fill="#3a8ad0"/><path d="M811 734L816 743" stroke="#555" stroke-width="1.1"/><path d="M813 742L818 744L818 749L813 747Z" fill="#e8a040"/><path d="M777.5 941.5H783M777.5 941.5V953H780" fill="none" stroke="#999"/><rect x="780.5" y="943.5" width="12" height="13" fill="#fff" stroke="#3a8ad0" stroke-width="1.1"/><path d="M783 947H790M783 949.5H790M783 952H790" stroke="#3a8ad0" stroke-width="0.9"/><path d="M812.5 947.5H822.5M817.5 942.5V952.5" stroke="#aaa" stroke-width="1"/><rect x="778" y="962" width="10" height="12" rx="1" fill="#f5c16c" stroke="#e8a040"/><rect x="780.5" y="960.5" width="5" height="3" rx="1" fill="#fff" stroke="#888" stroke-width="0.8"/><rect x="783.5" y="965.5" width="9" height="10" fill="#fff" stroke="#3a8ad0" stroke-width="1.1"/><path d="M812.5 968H822.5" stroke="#3a8ad0" stroke-width="1.1"/><rect x="780.5" y="983.5" width="8" height="8" fill="none" stroke="#555"/><path d="M784.5 985.5V989.5M782.5 987.5H786.5" stroke="#555"/><path d="M784.5 980.5L783 982H786Z M784.5 994.5L783 993H786Z M777.5 987.5L779 986V989Z M791.5 987.5L790 986V989Z" fill="#3a8ad0"/><rect x="811.5" y="981.5" width="13" height="13" fill="none" stroke="#3a8ad0" stroke-width="1.1" stroke-dasharray="2 1.3"/><path d="M816 984H823V992Z" fill="#3a8ad0"/><path d="M811 980L816 989" stroke="#555" stroke-width="1.1"/><path d="M813 988L818 990L818 995L813 993Z" fill="#e8a040"/><path d="M837 233L841.5 228.5L846 233" fill="none" stroke="#c6c6c6" stroke-width="1"/><path d="M837 1117L841.5 1121.5L846 1117" fill="none" stroke="#c6c6c6" stroke-width="1"/><path d="M1897 999L1902.5 994L1908 999" fill="none" stroke="#c6c6c6" stroke-width="1"/><path d="M1897 1112L1902.5 1117L1908 1112" fill="none" stroke="#c6c6c6" stroke-width="1"/></svg>
</body></html>
